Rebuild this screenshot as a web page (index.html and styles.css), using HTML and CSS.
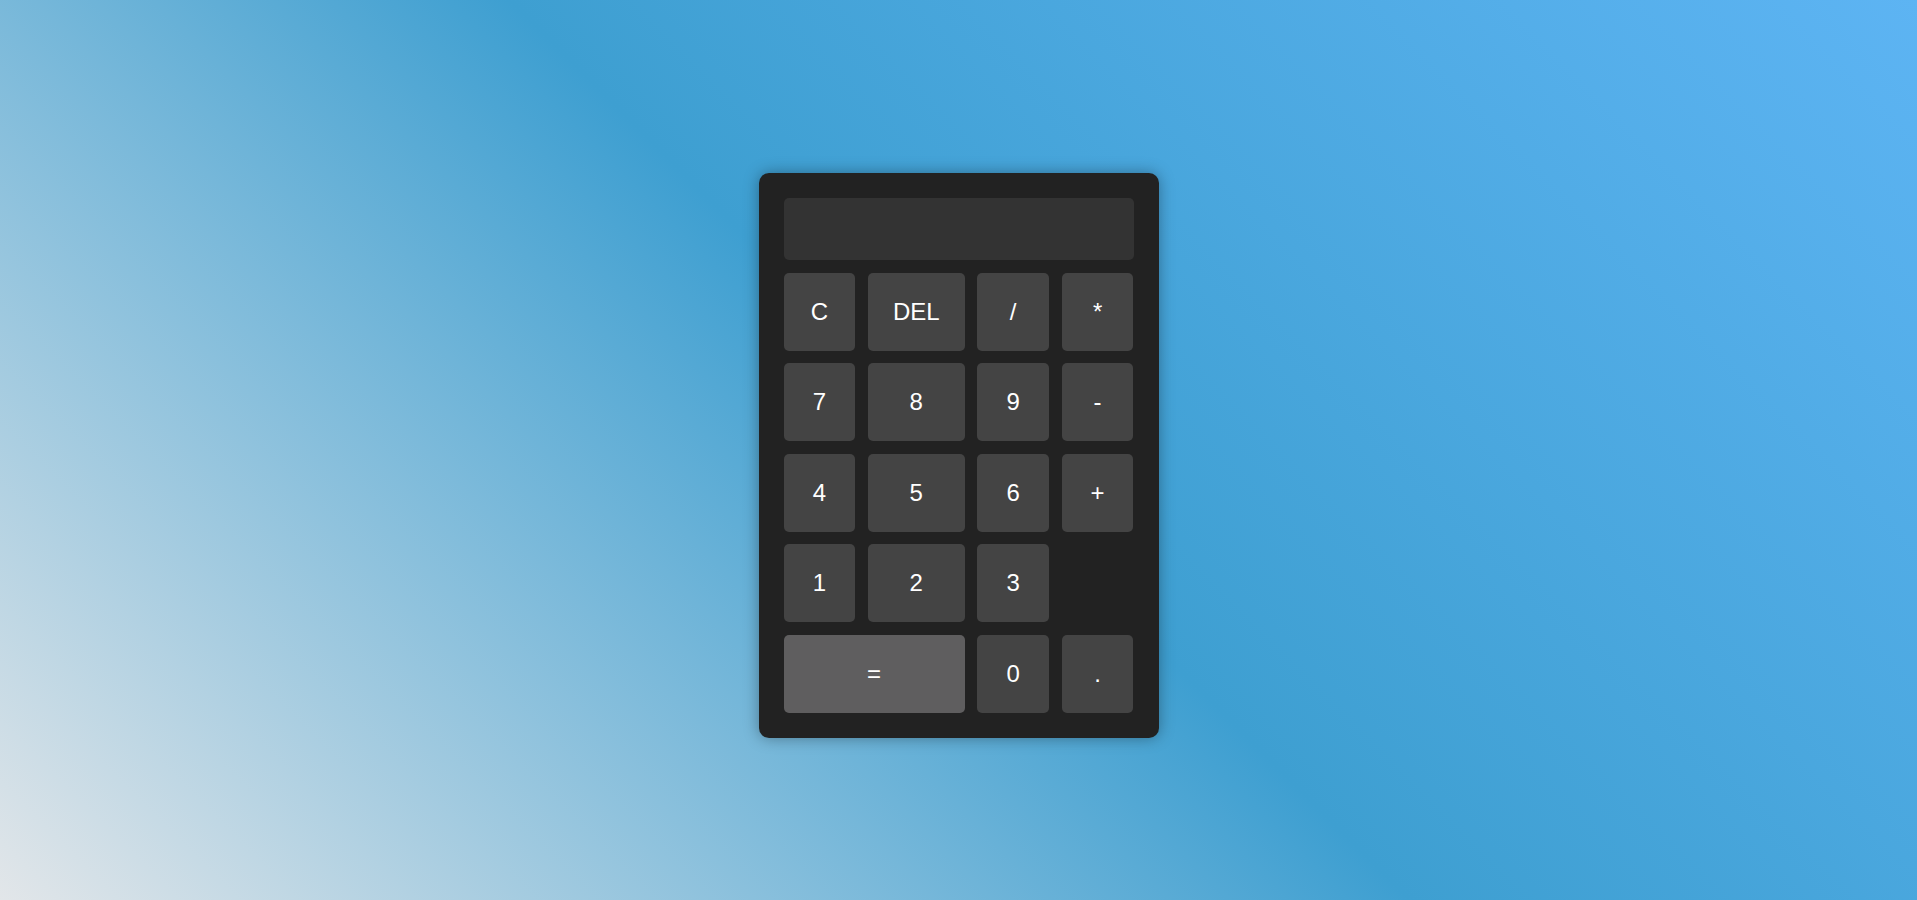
FILE: index.html
```html
<!DOCTYPE html>
<html lang="en">
<head>
<meta charset="UTF-8">
<title>Calculator</title>
<link rel="stylesheet" href="styles.css">
</head>
<body>
<div class="calculator">
  <div class="display"></div>
  <div class="keys">
    <button class="key">C</button>
    <button class="key">DEL</button>
    <button class="key">/</button>
    <button class="key">*</button>
    <button class="key">7</button>
    <button class="key">8</button>
    <button class="key">9</button>
    <button class="key">-</button>
    <button class="key">4</button>
    <button class="key">5</button>
    <button class="key">6</button>
    <button class="key">+</button>
    <button class="key">1</button>
    <button class="key">2</button>
    <button class="key">3</button>
    <span class="blank"></span>
    <button class="key key-equals">=</button>
    <button class="key">0</button>
    <button class="key">.</button>
  </div>
</div>
</body>
</html>
```
FILE: styles.css
```css
* { box-sizing: border-box; }
html, body { margin: 0; height: 100%; }
body {
  min-height: 100vh;
  display: flex;
  justify-content: center;
  align-items: center;
  padding-top: 11px;
  font-family: "Liberation Sans", Arial, sans-serif;
  background: linear-gradient(45deg, #e2e6e9 0%, #3e9fd1 50%, #5db4f3 100%);
}
.calculator {
  width: 400px;
  padding: 25px;
  background: #222222;
  border-radius: 10px;
  box-shadow: 0 0 15px rgba(0, 0, 0, 0.35);
  display: flex;
  flex-direction: column;
  gap: 12.5px;
}
.display {
  height: 62px;
  background: #333333;
  border-radius: 5px;
}
.keys {
  display: grid;
  grid-template-columns: 72fr 97fr 72fr 72fr;
  grid-auto-rows: 78px;
  gap: 12.5px;
}
.key {
  border: none;
  border-radius: 5px;
  background: #444444;
  color: #ffffff;
  font-family: "Liberation Sans", Arial, sans-serif;
  font-size: 24px;
  padding: 0;
  display: flex;
  align-items: center;
  justify-content: center;
}
.key-equals {
  grid-column: span 2;
  background: #5f5e5f;
}
```
